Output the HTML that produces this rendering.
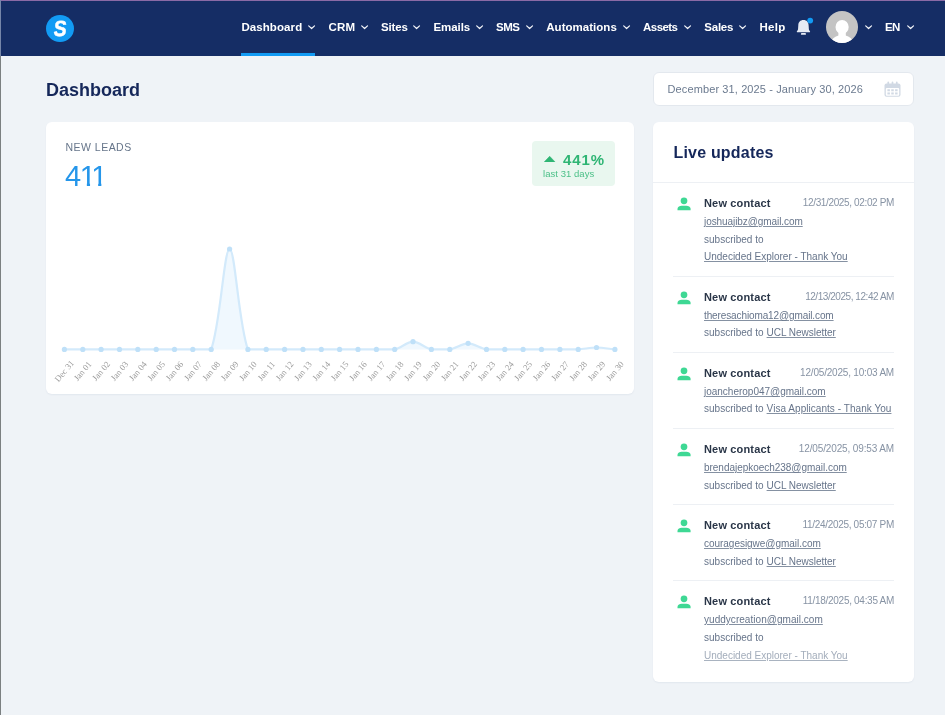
<!DOCTYPE html>
<html lang="en">
<head>
<meta charset="utf-8">
<title>Dashboard</title>
<style>
*{box-sizing:border-box;margin:0;padding:0}
html,body{width:945px;height:715px;overflow:hidden}
body{background:#eff3f7;font-family:"Liberation Sans",sans-serif;color:#142d63;position:relative}
.topline{position:absolute;left:0;top:0;width:945px;height:1px;background:#8a6aa6}
.leftline{position:absolute;left:0;top:0;width:1px;height:715px;background:linear-gradient(#7586a9 0,#7586a9 56px,#7b8081 56px,#7b8081 100%)}
#wrap{position:absolute;left:0;top:0;width:945px;height:715px;will-change:transform}
header{position:absolute;left:1px;top:1px;width:944px;height:55px;background:#152d65}
.logo{position:absolute;left:45px;top:13.8px;width:28.3px;height:27.5px;border-radius:50%;background:#129bf4}
.logo span{position:absolute;left:0;top:0;width:28.3px;height:27.5px;color:#fff;font-weight:700;font-size:22px;line-height:27.5px;text-align:center;-webkit-text-stroke:.45px #fff;transform:translate(0,.2px) scaleX(.88) skewX(-7deg)}
.ni{position:absolute;top:19px;color:#fff;font-weight:700;font-size:11.5px;line-height:14px;white-space:nowrap}
.chev{position:absolute;top:23.5px;width:8px;height:5px;overflow:visible}
.underline{position:absolute;left:240px;top:52px;width:74px;height:3px;background:#129bf4}
.bell{position:absolute;left:795px;top:18px;width:16px;height:17px;overflow:visible}
.avatar{position:absolute;left:825px;top:10px;width:32px;height:32px;border-radius:50%;background:#c4c4c4;overflow:hidden}
h1{position:absolute;left:46px;top:79px;font-size:18px;line-height:22px;font-weight:700;color:#15275a}
.datebox{position:absolute;left:653px;top:72px;width:261px;height:34px;background:#fff;border:1px solid #e3e8ee;border-radius:6px}
.datebox span{position:absolute;left:13.5px;top:9px;font-size:11px;line-height:14px;color:#6b7a8f;white-space:nowrap}
.cal{position:absolute;left:229.5px;top:8px;width:17px;height:16.5px}
.card{position:absolute;background:#fff;border-radius:6px;box-shadow:0 1px 2px rgba(20,45,99,.06)}
#leads{left:46px;top:122px;width:588px;height:272px}
#live{left:653px;top:122px;width:261px;height:560px}
.chart{position:absolute;left:0;top:0}
.nl{position:absolute;left:19.5px;top:18.5px;font-size:10.5px;line-height:13px;color:#66758a;white-space:nowrap}
.num{position:absolute;left:18.9px;top:37.9px;font-size:29px;line-height:32px;height:32px;color:#2596ea;white-space:nowrap}
.num span{display:inline-block;height:32px;vertical-align:top}
.num .d4{margin-right:-1.2px}
.num .d1{margin-right:-4.83px;clip-path:polygon(0 0,10.2px 0,10.2px 100%,7px 100%,7px 22.9px,0 22.9px)}
.badge{position:absolute;left:486px;top:19px;width:83px;height:45px;background:#e9f7ef;border-radius:4px}
.badge .tri{position:absolute;left:11.1px;top:14.5px;width:13.3px;height:6.8px}
.badge b{position:absolute;left:31px;top:9.5px;font-size:15px;line-height:18px;color:#2fb574;white-space:nowrap}
.badge i{position:absolute;left:11px;top:26.8px;font-style:normal;font-size:9.5px;line-height:12px;color:#4cc088;white-space:nowrap}
.lt{position:absolute;left:20.5px;top:21.1px;font-size:16px;line-height:20px;font-weight:700;color:#15275a;white-space:nowrap}
.hr{position:absolute;left:0;top:60px;width:261px;height:1px;background:#edf0f4}
.item{position:absolute;left:20px;width:221px;border-bottom:1px solid #edf0f4}
.item.last{border-bottom:none}
.person{position:absolute;left:4.1px;top:14.1px;width:14px;height:14px}
.nc{position:absolute;left:31px;top:13px;font-size:11px;line-height:14px;font-weight:700;color:#2a3648;white-space:nowrap}
.ts{position:absolute;right:0;top:13.3px;font-size:10px;line-height:14px;color:#8793a4;white-space:nowrap}
.ln{position:absolute;left:31px;font-size:10px;line-height:14px;color:#66748a;text-decoration:underline;text-decoration-color:#8591a2;text-decoration-thickness:1px;text-underline-offset:1px;white-space:nowrap}
.sub{position:absolute;left:31px;font-size:10px;line-height:14px;color:#66748a;white-space:nowrap}
.fade{color:#a3adbb;text-decoration-color:#a9b3c0}
#n0{letter-spacing:0.090px}
#n1{letter-spacing:0.148px}
#n2{letter-spacing:-0.150px}
#n3{letter-spacing:-0.056px}
#n4{letter-spacing:-0.511px}
#n5{letter-spacing:0.022px}
#n6{letter-spacing:-0.584px}
#n7{letter-spacing:-0.241px}
#n8{letter-spacing:0.293px}
#n9{letter-spacing:-0.684px}
#dt{letter-spacing:0.114px}
#nl{letter-spacing:0.480px}
#pct{letter-spacing:0.875px}
#l31{letter-spacing:0.045px}
#lt{letter-spacing:0.190px}
#ts0{letter-spacing:-0.364px}
#em0{letter-spacing:-0.074px}
#lk0{letter-spacing:-0.004px}
#sb0{letter-spacing:0.001px}
#nc0{letter-spacing:0.160px}
#ts1{letter-spacing:-0.450px}
#em1{letter-spacing:-0.114px}
#lk1{letter-spacing:-0.035px}
#sb1{letter-spacing:0.001px}
#nc1{letter-spacing:0.160px}
#ts2{letter-spacing:-0.198px}
#em2{letter-spacing:-0.009px}
#lk2{letter-spacing:0.046px}
#sb2{letter-spacing:0.001px}
#nc2{letter-spacing:0.160px}
#ts3{letter-spacing:-0.135px}
#em3{letter-spacing:-0.030px}
#lk3{letter-spacing:-0.035px}
#sb3{letter-spacing:0.001px}
#nc3{letter-spacing:0.160px}
#ts4{letter-spacing:-0.304px}
#em4{letter-spacing:-0.030px}
#lk4{letter-spacing:-0.035px}
#sb4{letter-spacing:0.001px}
#nc4{letter-spacing:0.160px}
#ts5{letter-spacing:-0.296px}
#em5{letter-spacing:0.037px}
#lk5{letter-spacing:-0.004px}
#sb5{letter-spacing:0.001px}
#nc5{letter-spacing:0.160px}
</style>
</head>
<body>
<div id="wrap">
<header>
  <div class="logo"><span>S</span></div>
  <span class="ni" id="n0" style="left:240.4px">Dashboard</span>
<svg class="chev" style="left:307.3px" viewBox="0 0 8 5"><path d="M0.7 0.9 L3.6 3.5 L6.5 0.9" fill="none" stroke="#f4f6fa" stroke-width="1.25" stroke-linecap="round" stroke-linejoin="round"/></svg>
<span class="ni" id="n1" style="left:327.6px">CRM</span>
<svg class="chev" style="left:360.3px" viewBox="0 0 8 5"><path d="M0.7 0.9 L3.6 3.5 L6.5 0.9" fill="none" stroke="#f4f6fa" stroke-width="1.25" stroke-linecap="round" stroke-linejoin="round"/></svg>
<span class="ni" id="n2" style="left:379.9px">Sites</span>
<svg class="chev" style="left:412.3px" viewBox="0 0 8 5"><path d="M0.7 0.9 L3.6 3.5 L6.5 0.9" fill="none" stroke="#f4f6fa" stroke-width="1.25" stroke-linecap="round" stroke-linejoin="round"/></svg>
<span class="ni" id="n3" style="left:432.4px">Emails</span>
<svg class="chev" style="left:475.3px" viewBox="0 0 8 5"><path d="M0.7 0.9 L3.6 3.5 L6.5 0.9" fill="none" stroke="#f4f6fa" stroke-width="1.25" stroke-linecap="round" stroke-linejoin="round"/></svg>
<span class="ni" id="n4" style="left:495.0px">SMS</span>
<svg class="chev" style="left:525.2px" viewBox="0 0 8 5"><path d="M0.7 0.9 L3.6 3.5 L6.5 0.9" fill="none" stroke="#f4f6fa" stroke-width="1.25" stroke-linecap="round" stroke-linejoin="round"/></svg>
<span class="ni" id="n5" style="left:545.3px">Automations</span>
<svg class="chev" style="left:621.9px" viewBox="0 0 8 5"><path d="M0.7 0.9 L3.6 3.5 L6.5 0.9" fill="none" stroke="#f4f6fa" stroke-width="1.25" stroke-linecap="round" stroke-linejoin="round"/></svg>
<span class="ni" id="n6" style="left:642.1px">Assets</span>
<svg class="chev" style="left:683.0px" viewBox="0 0 8 5"><path d="M0.7 0.9 L3.6 3.5 L6.5 0.9" fill="none" stroke="#f4f6fa" stroke-width="1.25" stroke-linecap="round" stroke-linejoin="round"/></svg>
<span class="ni" id="n7" style="left:703.3px">Sales</span>
<svg class="chev" style="left:738.4px" viewBox="0 0 8 5"><path d="M0.7 0.9 L3.6 3.5 L6.5 0.9" fill="none" stroke="#f4f6fa" stroke-width="1.25" stroke-linecap="round" stroke-linejoin="round"/></svg>
<span class="ni" id="n8" style="left:758.5px">Help</span>
<span class="ni" id="n9" style="left:883.9px">EN</span>
<svg class="chev" style="left:905.8px" viewBox="0 0 8 5"><path d="M0.7 0.9 L3.6 3.5 L6.5 0.9" fill="none" stroke="#f4f6fa" stroke-width="1.25" stroke-linecap="round" stroke-linejoin="round"/></svg>
<svg class="chev" style="left:863.8px" viewBox="0 0 8 5"><path d="M0.7 0.9 L3.6 3.5 L6.5 0.9" fill="none" stroke="#f4f6fa" stroke-width="1.25" stroke-linecap="round" stroke-linejoin="round"/></svg>
  <div class="underline"></div>
  <svg class="bell" viewBox="0 0 16 17"><path d="M7.45 1.1 C4.2 1.1 2.4 3.3 2.3 6.2 L2.05 10 C1.95 11.1 1.5 11.7 .95 12.3 C.6 12.8 .85 13.3 1.45 13.3 H13.45 C14.05 13.3 14.3 12.8 13.95 12.3 C13.4 11.7 12.95 11.1 12.85 10 L12.6 6.2 C12.5 3.3 10.7 1.1 7.45 1.1 Z" fill="#e6ebf4"/><rect x="4.9" y="14" width="5.1" height="1.8" rx=".9" fill="#e6ebf4"/><circle cx="14.2" cy="1.6" r="2.9" fill="#129bf4"/></svg>
  <div class="avatar"><svg viewBox="0 0 32 32" width="32" height="32"><ellipse cx="16.1" cy="16" rx="6.6" ry="7.1" fill="#fff"/><rect x="12.4" y="20" width="7.4" height="6" fill="#fff"/><path d="M5.4 32 C5.4 27.4 9 25.6 12.6 24.5 H19.6 C23.2 25.6 26.8 27.4 26.8 32 Z" fill="#fff"/></svg></div>
</header>
<div class="topline"></div>
<div class="leftline"></div>
<h1>Dashboard</h1>
<div class="datebox"><span id="dt">December 31, 2025 - January 30, 2026</span>
<svg class="cal" viewBox="0 0 17 16"><rect x="0.5" y="2.2" width="16" height="13.4" rx="2" fill="#d1d9e4"/><rect x="1.8" y="6.8" width="13.4" height="7.6" rx="1" fill="#fff"/><rect x="3.4" y="0.3" width="1.7" height="3.2" rx=".85" fill="#d1d9e4"/><rect x="7.65" y="0.3" width="1.7" height="3.2" rx=".85" fill="#d1d9e4"/><rect x="11.9" y="0.3" width="1.7" height="3.2" rx=".85" fill="#d1d9e4"/><g fill="#d1d9e4"><rect x="3.4" y="8" width="2.5" height="2"/><rect x="7.25" y="8" width="2.5" height="2"/><rect x="11.1" y="8" width="2.5" height="2"/><rect x="3.4" y="11.2" width="2.5" height="2"/><rect x="7.25" y="11.2" width="2.5" height="2"/><rect x="11.1" y="11.2" width="2.5" height="2"/></g></svg>
</div>
<div class="card" id="leads">
<svg class="chart" width="588" height="272" viewBox="0 0 588 272">
<path d="M18.4 227.4 C23.9 227.4 31.2 227.4 36.8 227.4 C42.3 227.4 49.6 227.4 55.1 227.4 C60.6 227.4 67.9 227.4 73.5 227.4 C79.0 227.4 86.3 227.4 91.8 227.4 C97.3 227.4 104.6 227.4 110.2 227.4 C115.7 227.4 123.0 227.4 128.5 227.4 C134.0 227.4 141.3 227.4 146.8 227.4 C152.4 227.4 163.5 227.4 165.2 227.4 C174.5 201.9 178.0 127.0 183.6 127.0 C189.1 127.0 192.6 201.9 201.9 227.4 C203.6 227.4 214.7 227.4 220.2 227.4 C225.8 227.4 233.1 227.4 238.6 227.4 C244.1 227.4 251.4 227.4 257.0 227.4 C262.5 227.4 269.8 227.4 275.3 227.4 C280.8 227.4 288.1 227.4 293.6 227.4 C299.2 227.4 306.5 227.4 312.0 227.4 C317.5 227.4 324.8 227.4 330.4 227.4 C335.9 227.4 343.4 227.4 348.7 227.4 C354.4 226.2 361.5 219.7 367.0 219.7 C372.6 219.7 379.7 226.2 385.4 227.4 C390.7 227.4 398.4 227.4 403.8 227.4 C409.4 226.5 416.6 221.3 422.1 221.3 C427.6 221.3 434.8 226.5 440.5 227.4 C445.8 227.4 453.3 227.4 458.8 227.4 C464.3 227.4 471.6 227.4 477.1 227.4 C482.7 227.4 490.0 227.4 495.5 227.4 C501.0 227.4 508.3 227.4 513.9 227.4 C519.4 227.4 526.7 227.4 532.2 227.4 C537.7 227.1 545.0 225.5 550.5 225.5 C556.1 225.5 563.4 226.8 568.9 227.4 L568.9 227.4 L18.4 227.4 Z" fill="#f0f8fe" stroke="none"/>
<path d="M18.4 227.4 C23.9 227.4 31.2 227.4 36.8 227.4 C42.3 227.4 49.6 227.4 55.1 227.4 C60.6 227.4 67.9 227.4 73.5 227.4 C79.0 227.4 86.3 227.4 91.8 227.4 C97.3 227.4 104.6 227.4 110.2 227.4 C115.7 227.4 123.0 227.4 128.5 227.4 C134.0 227.4 141.3 227.4 146.8 227.4 C152.4 227.4 163.5 227.4 165.2 227.4 C174.5 201.9 178.0 127.0 183.6 127.0 C189.1 127.0 192.6 201.9 201.9 227.4 C203.6 227.4 214.7 227.4 220.2 227.4 C225.8 227.4 233.1 227.4 238.6 227.4 C244.1 227.4 251.4 227.4 257.0 227.4 C262.5 227.4 269.8 227.4 275.3 227.4 C280.8 227.4 288.1 227.4 293.6 227.4 C299.2 227.4 306.5 227.4 312.0 227.4 C317.5 227.4 324.8 227.4 330.4 227.4 C335.9 227.4 343.4 227.4 348.7 227.4 C354.4 226.2 361.5 219.7 367.0 219.7 C372.6 219.7 379.7 226.2 385.4 227.4 C390.7 227.4 398.4 227.4 403.8 227.4 C409.4 226.5 416.6 221.3 422.1 221.3 C427.6 221.3 434.8 226.5 440.5 227.4 C445.8 227.4 453.3 227.4 458.8 227.4 C464.3 227.4 471.6 227.4 477.1 227.4 C482.7 227.4 490.0 227.4 495.5 227.4 C501.0 227.4 508.3 227.4 513.9 227.4 C519.4 227.4 526.7 227.4 532.2 227.4 C537.7 227.1 545.0 225.5 550.5 225.5 C556.1 225.5 563.4 226.8 568.9 227.4" fill="none" stroke="#d3eafb" stroke-width="2.2" stroke-linejoin="round" stroke-linecap="round"/>
<g fill="#bfe0f8">
<circle cx="18.4" cy="227.4" r="2.6"/>
<circle cx="36.8" cy="227.4" r="2.6"/>
<circle cx="55.1" cy="227.4" r="2.6"/>
<circle cx="73.5" cy="227.4" r="2.6"/>
<circle cx="91.8" cy="227.4" r="2.6"/>
<circle cx="110.2" cy="227.4" r="2.6"/>
<circle cx="128.5" cy="227.4" r="2.6"/>
<circle cx="146.8" cy="227.4" r="2.6"/>
<circle cx="165.2" cy="227.4" r="2.6"/>
<circle cx="183.6" cy="127.0" r="2.6"/>
<circle cx="201.9" cy="227.4" r="2.6"/>
<circle cx="220.2" cy="227.4" r="2.6"/>
<circle cx="238.6" cy="227.4" r="2.6"/>
<circle cx="257.0" cy="227.4" r="2.6"/>
<circle cx="275.3" cy="227.4" r="2.6"/>
<circle cx="293.6" cy="227.4" r="2.6"/>
<circle cx="312.0" cy="227.4" r="2.6"/>
<circle cx="330.4" cy="227.4" r="2.6"/>
<circle cx="348.7" cy="227.4" r="2.6"/>
<circle cx="367.0" cy="219.7" r="2.6"/>
<circle cx="385.4" cy="227.4" r="2.6"/>
<circle cx="403.8" cy="227.4" r="2.6"/>
<circle cx="422.1" cy="221.3" r="2.6"/>
<circle cx="440.5" cy="227.4" r="2.6"/>
<circle cx="458.8" cy="227.4" r="2.6"/>
<circle cx="477.1" cy="227.4" r="2.6"/>
<circle cx="495.5" cy="227.4" r="2.6"/>
<circle cx="513.9" cy="227.4" r="2.6"/>
<circle cx="532.2" cy="227.4" r="2.6"/>
<circle cx="550.5" cy="225.5" r="2.6"/>
<circle cx="568.9" cy="227.4" r="2.6"/>
</g>
<g font-family="'Liberation Serif',serif" font-size="8.7" fill="#9c9c9c" text-anchor="middle">
<text transform="translate(18.3 249.0) rotate(-50)" y="3">Dec 31</text>
<text transform="translate(36.6 249.0) rotate(-50)" y="3">Jan 01</text>
<text transform="translate(55.0 249.0) rotate(-50)" y="3">Jan 02</text>
<text transform="translate(73.4 249.0) rotate(-50)" y="3">Jan 03</text>
<text transform="translate(91.7 249.0) rotate(-50)" y="3">Jan 04</text>
<text transform="translate(110.1 249.0) rotate(-50)" y="3">Jan 05</text>
<text transform="translate(128.4 249.0) rotate(-50)" y="3">Jan 06</text>
<text transform="translate(146.8 249.0) rotate(-50)" y="3">Jan 07</text>
<text transform="translate(165.1 249.0) rotate(-50)" y="3">Jan 08</text>
<text transform="translate(183.5 249.0) rotate(-50)" y="3">Jan 09</text>
<text transform="translate(201.8 249.0) rotate(-50)" y="3">Jan 10</text>
<text transform="translate(220.2 249.0) rotate(-50)" y="3">Jan 11</text>
<text transform="translate(238.5 249.0) rotate(-50)" y="3">Jan 12</text>
<text transform="translate(256.9 249.0) rotate(-50)" y="3">Jan 13</text>
<text transform="translate(275.2 249.0) rotate(-50)" y="3">Jan 14</text>
<text transform="translate(293.5 249.0) rotate(-50)" y="3">Jan 15</text>
<text transform="translate(311.9 249.0) rotate(-50)" y="3">Jan 16</text>
<text transform="translate(330.2 249.0) rotate(-50)" y="3">Jan 17</text>
<text transform="translate(348.6 249.0) rotate(-50)" y="3">Jan 18</text>
<text transform="translate(366.9 249.0) rotate(-50)" y="3">Jan 19</text>
<text transform="translate(385.3 249.0) rotate(-50)" y="3">Jan 20</text>
<text transform="translate(403.6 249.0) rotate(-50)" y="3">Jan 21</text>
<text transform="translate(422.0 249.0) rotate(-50)" y="3">Jan 22</text>
<text transform="translate(440.4 249.0) rotate(-50)" y="3">Jan 23</text>
<text transform="translate(458.7 249.0) rotate(-50)" y="3">Jan 24</text>
<text transform="translate(477.0 249.0) rotate(-50)" y="3">Jan 25</text>
<text transform="translate(495.4 249.0) rotate(-50)" y="3">Jan 26</text>
<text transform="translate(513.8 249.0) rotate(-50)" y="3">Jan 27</text>
<text transform="translate(532.1 249.0) rotate(-50)" y="3">Jan 28</text>
<text transform="translate(550.4 249.0) rotate(-50)" y="3">Jan 29</text>
<text transform="translate(568.8 249.0) rotate(-50)" y="3">Jan 30</text>
</g></svg>
<div class="nl" id="nl">NEW LEADS</div>
<div class="num"><span class="d4">4</span><span class="d1">1</span><span class="d1">1</span></div>
<div class="badge"><svg class="tri" viewBox="0 0 13 7"><path d="M6.5 0.3 L12.6 6.7 H0.4 Z" fill="#2fb574" stroke="#2fb574" stroke-width=".6" stroke-linejoin="round"/></svg><b id="pct">441%</b><i id="l31">last 31 days</i></div>
</div>
<div class="card" id="live">
<div class="lt" id="lt">Live updates</div>
<div class="hr"></div>
<div class="item" style="top:61px;height:94px"><svg class="person" viewBox="0 0 14 14"><circle cx="7" cy="3.8" r="3.35" fill="#3ed894"/><path d="M0.5 13.3 V11.7 C0.5 9.9 2.9 8.8 4.6 8.8 H9.5 C11.2 8.8 13.6 9.9 13.6 11.7 V13.3 Z" fill="#3ed894"/></svg><span class="nc" id="nc0">New contact</span><span class="ts" id="ts0">12/31/2025, 02:02 PM</span><a class="em ln" id="em0" style="top:32px">joshuajibz@gmail.com</a><span class="sub" id="sb0" style="top:50px">subscribed to</span><a class="lk ln" id="lk0" style="top:67px;left:31px">Undecided Explorer - Thank You</a></div>
<div class="item" style="top:155px;height:76px"><svg class="person" viewBox="0 0 14 14"><circle cx="7" cy="3.8" r="3.35" fill="#3ed894"/><path d="M0.5 13.3 V11.7 C0.5 9.9 2.9 8.8 4.6 8.8 H9.5 C11.2 8.8 13.6 9.9 13.6 11.7 V13.3 Z" fill="#3ed894"/></svg><span class="nc" id="nc1">New contact</span><span class="ts" id="ts1">12/13/2025, 12:42 AM</span><a class="em ln" id="em1" style="top:32px">theresachioma12@gmail.com</a><span class="sub" id="sb1" style="top:49.3px">subscribed to</span><a class="lk ln" id="lk1" style="top:49.3px;left:93.6px">UCL Newsletter</a></div>
<div class="item" style="top:231px;height:76px"><svg class="person" viewBox="0 0 14 14"><circle cx="7" cy="3.8" r="3.35" fill="#3ed894"/><path d="M0.5 13.3 V11.7 C0.5 9.9 2.9 8.8 4.6 8.8 H9.5 C11.2 8.8 13.6 9.9 13.6 11.7 V13.3 Z" fill="#3ed894"/></svg><span class="nc" id="nc2">New contact</span><span class="ts" id="ts2">12/05/2025, 10:03 AM</span><a class="em ln" id="em2" style="top:32px">joancherop047@gmail.com</a><span class="sub" id="sb2" style="top:49.3px">subscribed to</span><a class="lk ln" id="lk2" style="top:49.3px;left:93.6px">Visa Applicants - Thank You</a></div>
<div class="item" style="top:307px;height:76px"><svg class="person" viewBox="0 0 14 14"><circle cx="7" cy="3.8" r="3.35" fill="#3ed894"/><path d="M0.5 13.3 V11.7 C0.5 9.9 2.9 8.8 4.6 8.8 H9.5 C11.2 8.8 13.6 9.9 13.6 11.7 V13.3 Z" fill="#3ed894"/></svg><span class="nc" id="nc3">New contact</span><span class="ts" id="ts3">12/05/2025, 09:53 AM</span><a class="em ln" id="em3" style="top:32px">brendajepkoech238@gmail.com</a><span class="sub" id="sb3" style="top:50px">subscribed to</span><a class="lk ln" id="lk3" style="top:50px;left:93.6px">UCL Newsletter</a></div>
<div class="item" style="top:383px;height:76px"><svg class="person" viewBox="0 0 14 14"><circle cx="7" cy="3.8" r="3.35" fill="#3ed894"/><path d="M0.5 13.3 V11.7 C0.5 9.9 2.9 8.8 4.6 8.8 H9.5 C11.2 8.8 13.6 9.9 13.6 11.7 V13.3 Z" fill="#3ed894"/></svg><span class="nc" id="nc4">New contact</span><span class="ts" id="ts4">11/24/2025, 05:07 PM</span><a class="em ln" id="em4" style="top:32px">couragesigwe@gmail.com</a><span class="sub" id="sb4" style="top:50px">subscribed to</span><a class="lk ln" id="lk4" style="top:50px;left:93.6px">UCL Newsletter</a></div>
<div class="item last" style="top:459px;height:94px"><svg class="person" viewBox="0 0 14 14"><circle cx="7" cy="3.8" r="3.35" fill="#3ed894"/><path d="M0.5 13.3 V11.7 C0.5 9.9 2.9 8.8 4.6 8.8 H9.5 C11.2 8.8 13.6 9.9 13.6 11.7 V13.3 Z" fill="#3ed894"/></svg><span class="nc" id="nc5">New contact</span><span class="ts" id="ts5">11/18/2025, 04:35 AM</span><a class="em ln" id="em5" style="top:32px">yuddycreation@gmail.com</a><span class="sub" id="sb5" style="top:50px">subscribed to</span><a class="lk ln fade" id="lk5" style="top:68.2px;left:31px">Undecided Explorer - Thank You</a></div>
</div>
</div>
</body>
</html>
